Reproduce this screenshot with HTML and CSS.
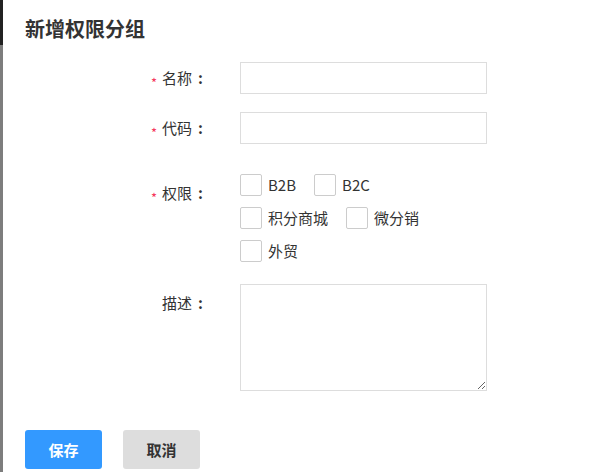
FILE: index.html
```html
<!DOCTYPE html>
<html lang="zh-CN">
<head>
<meta charset="utf-8">
<title>新增权限分组</title>
<link rel="stylesheet" href="styles.css">
</head>
<body>
<div class="page">
  <div class="backdrop"><div class="backdrop-top"></div></div>
  <div class="dialog">
    <h2 class="title">新增权限分组</h2>
    <form class="form">
      <div class="row row-name">
        <label class="label"><span class="req">*</span>名称<span class="colon">:</span></label>
        <input class="input" type="text">
      </div>
      <div class="row row-code">
        <label class="label"><span class="req">*</span>代码<span class="colon">:</span></label>
        <input class="input" type="text">
      </div>
      <div class="row row-perm">
        <label class="label label-pad"><span class="req">*</span>权限<span class="colon">:</span></label>
        <div class="checks">
          <div class="check-line">
            <label class="check"><span class="box"></span>B2B</label>
            <label class="check"><span class="box"></span>B2C</label>
          </div>
          <div class="check-line">
            <label class="check"><span class="box"></span>积分商城</label>
            <label class="check"><span class="box"></span>微分销</label>
          </div>
          <div class="check-line">
            <label class="check"><span class="box"></span>外贸</label>
          </div>
        </div>
      </div>
      <div class="row row-desc">
        <label class="label label-pad">描述<span class="colon">:</span></label>
        <textarea class="textarea"></textarea>
      </div>
    </form>
    <div class="actions">
      <button class="btn btn-primary" type="button">保存</button>
      <button class="btn btn-default" type="button">取消</button>
    </div>
  </div>
</div>
</body>
</html>
```

FILE: styles.css
```css
html, body {
  margin: 0;
  padding: 0;
  height: 100%;
}
body {
  font-family: "Noto Sans CJK SC", "Noto Sans", sans-serif;
  color: #333;
  background: #fff;
}
.page {
  display: flex;
  height: 472px;
  overflow: hidden;
}
.backdrop {
  width: 3px;
  flex: none;
  background: #7d7d7d;
}
.backdrop-top {
  height: 45px;
  background: #222;
}
.dialog {
  flex: 1;
  background: #fff;
  padding: 15px 0 0 22px;
}
.title {
  margin: 0;
  font-size: 20px;
  line-height: 28px;
  font-weight: bold;
  color: #333;
}
.form {
  display: flex;
  flex-direction: column;
  margin-top: 19px;
}
.row {
  display: grid;
  grid-template-columns: 180px 247px;
  column-gap: 35px;
  align-items: start;
}
.row-code {
  margin-top: 18px;
}
.row-perm {
  margin-top: 30px;
}
.row-desc {
  margin-top: 22px;
}
.label {
  display: block;
  height: 32px;
  text-align: right;
  font-size: 15px;
  line-height: 32px;
  color: #333;
  white-space: nowrap;
  padding-right: 2px;
}
.label-pad {
  padding-top: 3px;
}
.colon {
  margin-left: 6px;
  font-weight: bold;
  line-height: 1;
}
.req {
  color: #f5365c;
  font-size: 13px;
  margin-right: 5px;
  line-height: 1;
  vertical-align: -4px;
}
.input {
  box-sizing: border-box;
  width: 247px;
  height: 32px;
  border: 1px solid #ddd;
  border-radius: 0;
  margin: 0;
  padding: 0 8px;
  outline: none;
  background: #fff;
}
.checks {
  display: flex;
  flex-direction: column;
  gap: 11px;
}
.check-line {
  display: flex;
  gap: 18px;
}
.check {
  display: flex;
  align-items: center;
  gap: 6px;
  font-size: 15px;
  line-height: 22px;
  color: #333;
}
.box {
  box-sizing: border-box;
  width: 22px;
  height: 22px;
  border: 1px solid #ccc;
  border-radius: 2px;
  background: #fff;
}
.textarea {
  box-sizing: border-box;
  width: 247px;
  height: 107px;
  border: 1px solid #ddd;
  margin: 0;
  padding: 4px 8px;
  outline: none;
  display: block;
}
.actions {
  display: flex;
  gap: 21px;
  margin-top: 39px;
}
.btn {
  box-sizing: border-box;
  width: 77px;
  height: 39px;
  border: none;
  border-radius: 3px;
  font-family: "Noto Sans CJK SC", "Noto Sans", sans-serif;
  font-size: 15px;
  font-weight: bold;
  line-height: 39px;
  padding: 0;
  cursor: pointer;
}
.btn-primary {
  background: #3399ff;
  color: #fff;
}
.btn-default {
  background: #dddddd;
  color: #333;
}
```
